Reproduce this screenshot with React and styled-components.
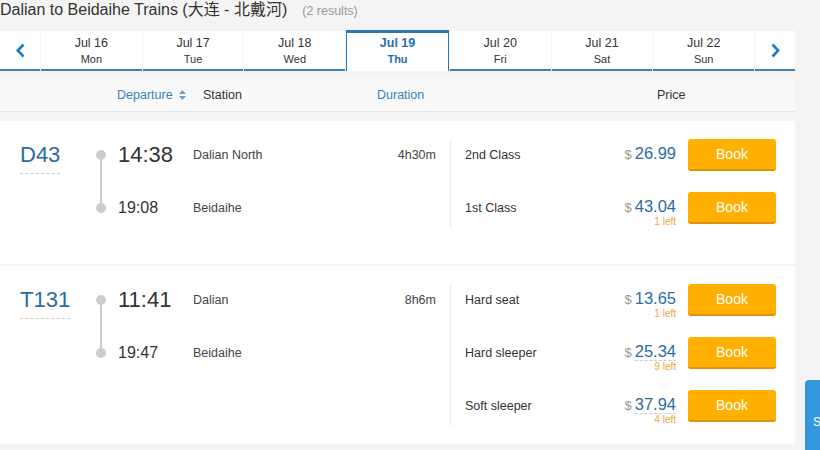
import React from "react";
import styled, { createGlobalStyle } from "styled-components";

const GlobalStyle = createGlobalStyle`
    html, body {
        margin: 0;
        padding: 0;
        background: #f4f4f4;
        overflow: hidden;
    }
    body {
        font-family: "Liberation Sans", "Noto Sans CJK SC", Arial, sans-serif;
        color: #333;
    }
`;

const days = [
    { date: "Jul 16", day: "Mon" },
    { date: "Jul 17", day: "Tue" },
    { date: "Jul 18", day: "Wed" },
    { date: "Jul 19", day: "Thu", active: true },
    { date: "Jul 20", day: "Fri" },
    { date: "Jul 21", day: "Sat" },
    { date: "Jul 22", day: "Sun" },
];

const trains = [
    {
        no: "D43",
        dep: "14:38",
        from: "Dalian North",
        arr: "19:08",
        to: "Beidaihe",
        duration: "4h30m",
        seats: [
            { name: "2nd Class", price: "26.99" },
            { name: "1st Class", price: "43.04", left: 1 },
        ],
    },
    {
        no: "T131",
        dep: "11:41",
        from: "Dalian",
        arr: "19:47",
        to: "Beidaihe",
        duration: "8h6m",
        seats: [
            { name: "Hard seat", price: "13.65", left: 1 },
            { name: "Hard sleeper", price: "25.34", left: 9, dashed: true },
            { name: "Soft sleeper", price: "37.94", left: 4, dashed: true },
        ],
    },
];

const Chevron = ({ dir }) => (
    <svg width="9" height="15" viewBox="0 0 9 15">
        <polyline
            points={dir === "left" ? "7.5,1.5 1.8,7.5 7.5,13.5" : "1.5,1.5 7.2,7.5 1.5,13.5"}
            fill="none"
            stroke="#1b7fc2"
            strokeWidth="2.6"
        />
    </svg>
);

const SortIcon = () => (
    <svg width="7" height="10" viewBox="0 0 7 10">
        <polygon points="3.5,0 7,4 0,4" fill="#6f9fc7" />
        <polygon points="0,6 7,6 3.5,10" fill="#6f9fc7" />
    </svg>
);

const App = () => {
    return (
        <>
            <GlobalStyle />
            <Page>
                <Title>
                    Dalian to Beidaihe Trains (大连 - 北戴河)
                    <Results>(2 results)</Results>
                </Title>

                <DateBar>
                    <ArrowCell>
                        <Chevron dir="left" />
                    </ArrowCell>
                    {days.map((d) => (
                        <DateTab key={d.date} $active={d.active}>
                            <TabDate>{d.date}</TabDate>
                            <TabDay>{d.day}</TabDay>
                        </DateTab>
                    ))}
                    <ArrowCell>
                        <Chevron dir="right" />
                    </ArrowCell>
                </DateBar>

                <HeaderRow>
                    <HeaderCell $width={86} $link>
                        Departure <SortIcon />
                    </HeaderCell>
                    <HeaderCell $width={174}>Station</HeaderCell>
                    <HeaderCell $width={280} $link>Duration</HeaderCell>
                    <HeaderCell>Price</HeaderCell>
                </HeaderRow>

                <TrainList>
                    {trains.map((t) => (
                        <TrainCard key={t.no}>
                            <TrainInfo>
                                <TrainNo>
                                    <NumberText>{t.no}</NumberText>
                                </TrainNo>
                                <Schedule>
                                    <Stop>
                                        <Dot $first />
                                        <Time $big>{t.dep}</Time>
                                        <Station>{t.from}</Station>
                                        <Duration>{t.duration}</Duration>
                                    </Stop>
                                    <Stop>
                                        <Dot />
                                        <Time>{t.arr}</Time>
                                        <Station>{t.to}</Station>
                                    </Stop>
                                </Schedule>
                            </TrainInfo>

                            <SeatList>
                                {t.seats.map((s) => (
                                    <SeatRow key={s.name}>
                                        <SeatName>{s.name}</SeatName>
                                        <PriceBox>
                                            <PriceLine>
                                                <Currency>$</Currency>
                                                <Amount $dashed={s.dashed}>{s.price}</Amount>
                                            </PriceLine>
                                            {s.left && <LeftText>{s.left} left</LeftText>}
                                        </PriceBox>
                                        <BookButton>Book</BookButton>
                                    </SeatRow>
                                ))}
                            </SeatList>
                        </TrainCard>
                    ))}
                </TrainList>
            </Page>
            <SideTab>Share</SideTab>
        </>
    );
};

const Page = styled.div`
    width: 795px;
`;

const Title = styled.h1`
    margin: 0;
    font-size: 16px;
    font-weight: normal;
    line-height: 20px;
    color: #333;
    white-space: nowrap;
`;

const Results = styled.span`
    margin-left: 15px;
    font-size: 12.5px;
    color: #999;
`;

const DateBar = styled.div`
    display: flex;
    align-items: flex-end;
    gap: 1px;
    height: 41px;
    margin-top: 9px;
`;

const ArrowCell = styled.div`
    width: 40px;
    height: 40px;
    box-sizing: border-box;
    background: #fff;
    border-bottom: 2px solid #3f80b3;
    display: flex;
    align-items: center;
    justify-content: center;
    cursor: pointer;
`;

const DateTab = styled.div`
    flex: 1;
    box-sizing: border-box;
    background: #fff;
    display: flex;
    flex-direction: column;
    align-items: center;
    height: ${(p) => (p.$active ? "41px" : "40px")};
    padding-top: ${(p) => (p.$active ? "2px" : "4px")};
    border-bottom: ${(p) => (p.$active ? "none" : "2px solid #3f80b3")};
    border-top: ${(p) => (p.$active ? "3px solid #2a77b7" : "none")};
    border-left: ${(p) => (p.$active ? "1px solid #2a77b7" : "none")};
    border-right: ${(p) => (p.$active ? "1px solid #2a77b7" : "none")};
    color: ${(p) => (p.$active ? "#2a6fab" : "#333")};
    font-weight: ${(p) => (p.$active ? "bold" : "normal")};
    cursor: pointer;
`;

const TabDate = styled.div`
    font-size: 12.5px;
    line-height: 16px;
`;

const TabDay = styled.div`
    font-size: 11px;
    line-height: 14px;
    margin-top: 1px;
`;

const HeaderRow = styled.div`
    display: flex;
    align-items: center;
    height: 32px;
    margin-top: 8px;
    padding-left: 117px;
    background: #f9f9f9;
    border-bottom: 1px solid #e4e4e4;
    font-size: 12.5px;
`;

const HeaderCell = styled.div`
    display: flex;
    align-items: center;
    gap: 6px;
    width: ${(p) => (p.$width ? `${p.$width}px` : "auto")};
    color: ${(p) => (p.$link ? "#3a82bc" : "#333")};
`;

const TrainList = styled.div`
    display: flex;
    flex-direction: column;
    gap: 2px;
    margin-top: 9px;
`;

const TrainCard = styled.div`
    display: flex;
    align-items: flex-start;
    min-height: 143px;
    box-sizing: border-box;
    padding: 18px 0 18px;
    background: #fff;
`;

const TrainInfo = styled.div`
    display: flex;
    align-items: flex-start;
    width: 450px;
    box-sizing: border-box;
    padding: 0 14px 0 20px;
`;

const TrainNo = styled.div`
    width: 75px;
    flex-shrink: 0;
`;

const NumberText = styled.span`
    display: inline-block;
    font-size: 22px;
    line-height: 32px;
    padding-bottom: 2px;
    color: #2c6ca3;
    border-bottom: 1px dashed #ccc;
    cursor: pointer;
`;

const Schedule = styled.div`
    flex: 1;
    display: flex;
    flex-direction: column;
    gap: 21px;
`;

const Stop = styled.div`
    display: flex;
    align-items: center;
    height: 32px;
`;

const Dot = styled.span`
    position: relative;
    flex-shrink: 0;
    width: 10px;
    height: 10px;
    margin-left: 1px;
    border-radius: 50%;
    background: #ccc;

    &::after {
        content: "";
        display: ${(p) => (p.$first ? "block" : "none")};
        position: absolute;
        left: 4px;
        top: 5px;
        width: 2px;
        height: 53px;
        background: #ccc;
    }
`;

const Time = styled.span`
    width: 75px;
    margin-left: 12px;
    font-size: ${(p) => (p.$big ? "22px" : "16px")};
    color: #333;
`;

const Station = styled.span`
    flex: 1;
    font-size: 12.5px;
    color: #444;
`;

const Duration = styled.span`
    font-size: 12.5px;
    color: #444;
`;

const SeatList = styled.div`
    flex: 1;
    display: flex;
    flex-direction: column;
    gap: 17px;
    padding: 0 19px 0 14px;
    border-left: 1px solid #ececec;
`;

const SeatRow = styled.div`
    display: flex;
    align-items: flex-start;
    height: 36px;
`;

const SeatName = styled.div`
    flex: 1;
    font-size: 12.5px;
    line-height: 32px;
    color: #333;
`;

const PriceBox = styled.div`
    display: flex;
    flex-direction: column;
    align-items: flex-end;
    padding-top: 6px;
`;

const PriceLine = styled.div`
    display: flex;
    align-items: baseline;
`;

const Currency = styled.span`
    font-size: 13px;
    color: #999;
    margin-right: 3px;
`;

const Amount = styled.span`
    display: inline-block;
    font-size: 16.5px;
    line-height: 17px;
    color: #2c6ca3;
    border-bottom: 1px dashed ${(p) => (p.$dashed ? "#ccc" : "transparent")};
`;

const LeftText = styled.div`
    font-size: 10px;
    line-height: 12px;
    color: #eea63c;
`;

const BookButton = styled.button`
    width: 88px;
    height: 32px;
    margin-left: 12px;
    padding: 0;
    box-sizing: border-box;
    background: #ffb000;
    border: none;
    border-bottom: 2px solid #e0920c;
    border-radius: 3px;
    color: #fff;
    font-family: inherit;
    font-size: 14px;
    cursor: pointer;
`;

const SideTab = styled.div`
    position: fixed;
    left: 805px;
    top: 380px;
    width: 60px;
    height: 90px;
    box-sizing: border-box;
    padding: 35px 0 0 8px;
    background: #3598dc;
    border-radius: 4px 0 0 0;
    color: #fff;
    font-size: 12px;
    white-space: nowrap;
`;

export default App;
